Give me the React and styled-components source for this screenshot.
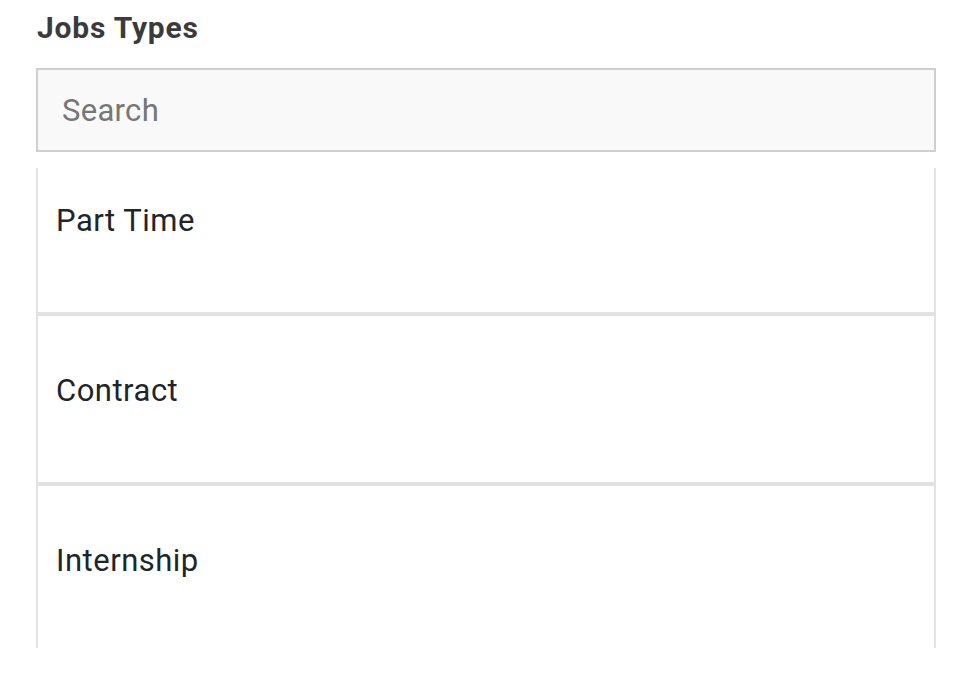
import React, { useEffect, useRef } from "react";
import styled, { createGlobalStyle } from "styled-components";

const jobTypes = ["Part Time", "Contract", "Internship"];

function App() {
    const listRef = useRef(null);

    useEffect(() => {
        // list is scrolled down a little under the search box
        if (listRef.current) listRef.current.scrollTop = 24;
    }, []);

    return (
        <>
            <GlobalStyle />
            <Container>
                <Title>Jobs Types</Title>
                <SearchInput type="text" placeholder="Search" />
                <List ref={listRef}>
                    {jobTypes.map((type) => (
                        <Item key={type}>{type}</Item>
                    ))}
                </List>
            </Container>
        </>
    );
}

export default App;

const GlobalStyle = createGlobalStyle`
    body {
        margin: 0;
        background-color: #FFF;
        font-family: Roboto, "Liberation Sans", sans-serif;
    }
    * {
        box-sizing: border-box;
    }
`;

const Container = styled.div`
    display: flex;
    flex-direction: column;
    width: 900px;
    margin-left: 36px;
    padding-top: 10px;
`;

const Title = styled.div`
    height: 36px;
    line-height: 36px;
    font-size: 30px;
    font-weight: 700;
    letter-spacing: 0.8px;
    color: #3b3b3b;
    padding-left: 1px;
`;

const SearchInput = styled.input`
    margin-top: 22px;
    height: 84px;
    width: 100%;
    border: 2px solid #cfcfcf;
    background-color: #f9f9f9;
    padding: 0 24px;
    font-family: Roboto, "Liberation Sans", sans-serif;
    font-size: 31px;
    letter-spacing: 0.3px;
    color: #333;
    outline: none;

    &::placeholder {
        color: #767676;
    }
`;

const List = styled.div`
    margin-top: 16px;
    height: 480px;
    overflow-y: scroll;
    scrollbar-width: none;

    &::-webkit-scrollbar {
        display: none;
    }
`;

const Item = styled.div`
    height: 170px;
    border: 2px solid #e2e2e2;
    padding: 55px 18px 0;
    font-size: 31px;
    line-height: 40px;
    letter-spacing: 0.5px;
    color: #212529;
`;
